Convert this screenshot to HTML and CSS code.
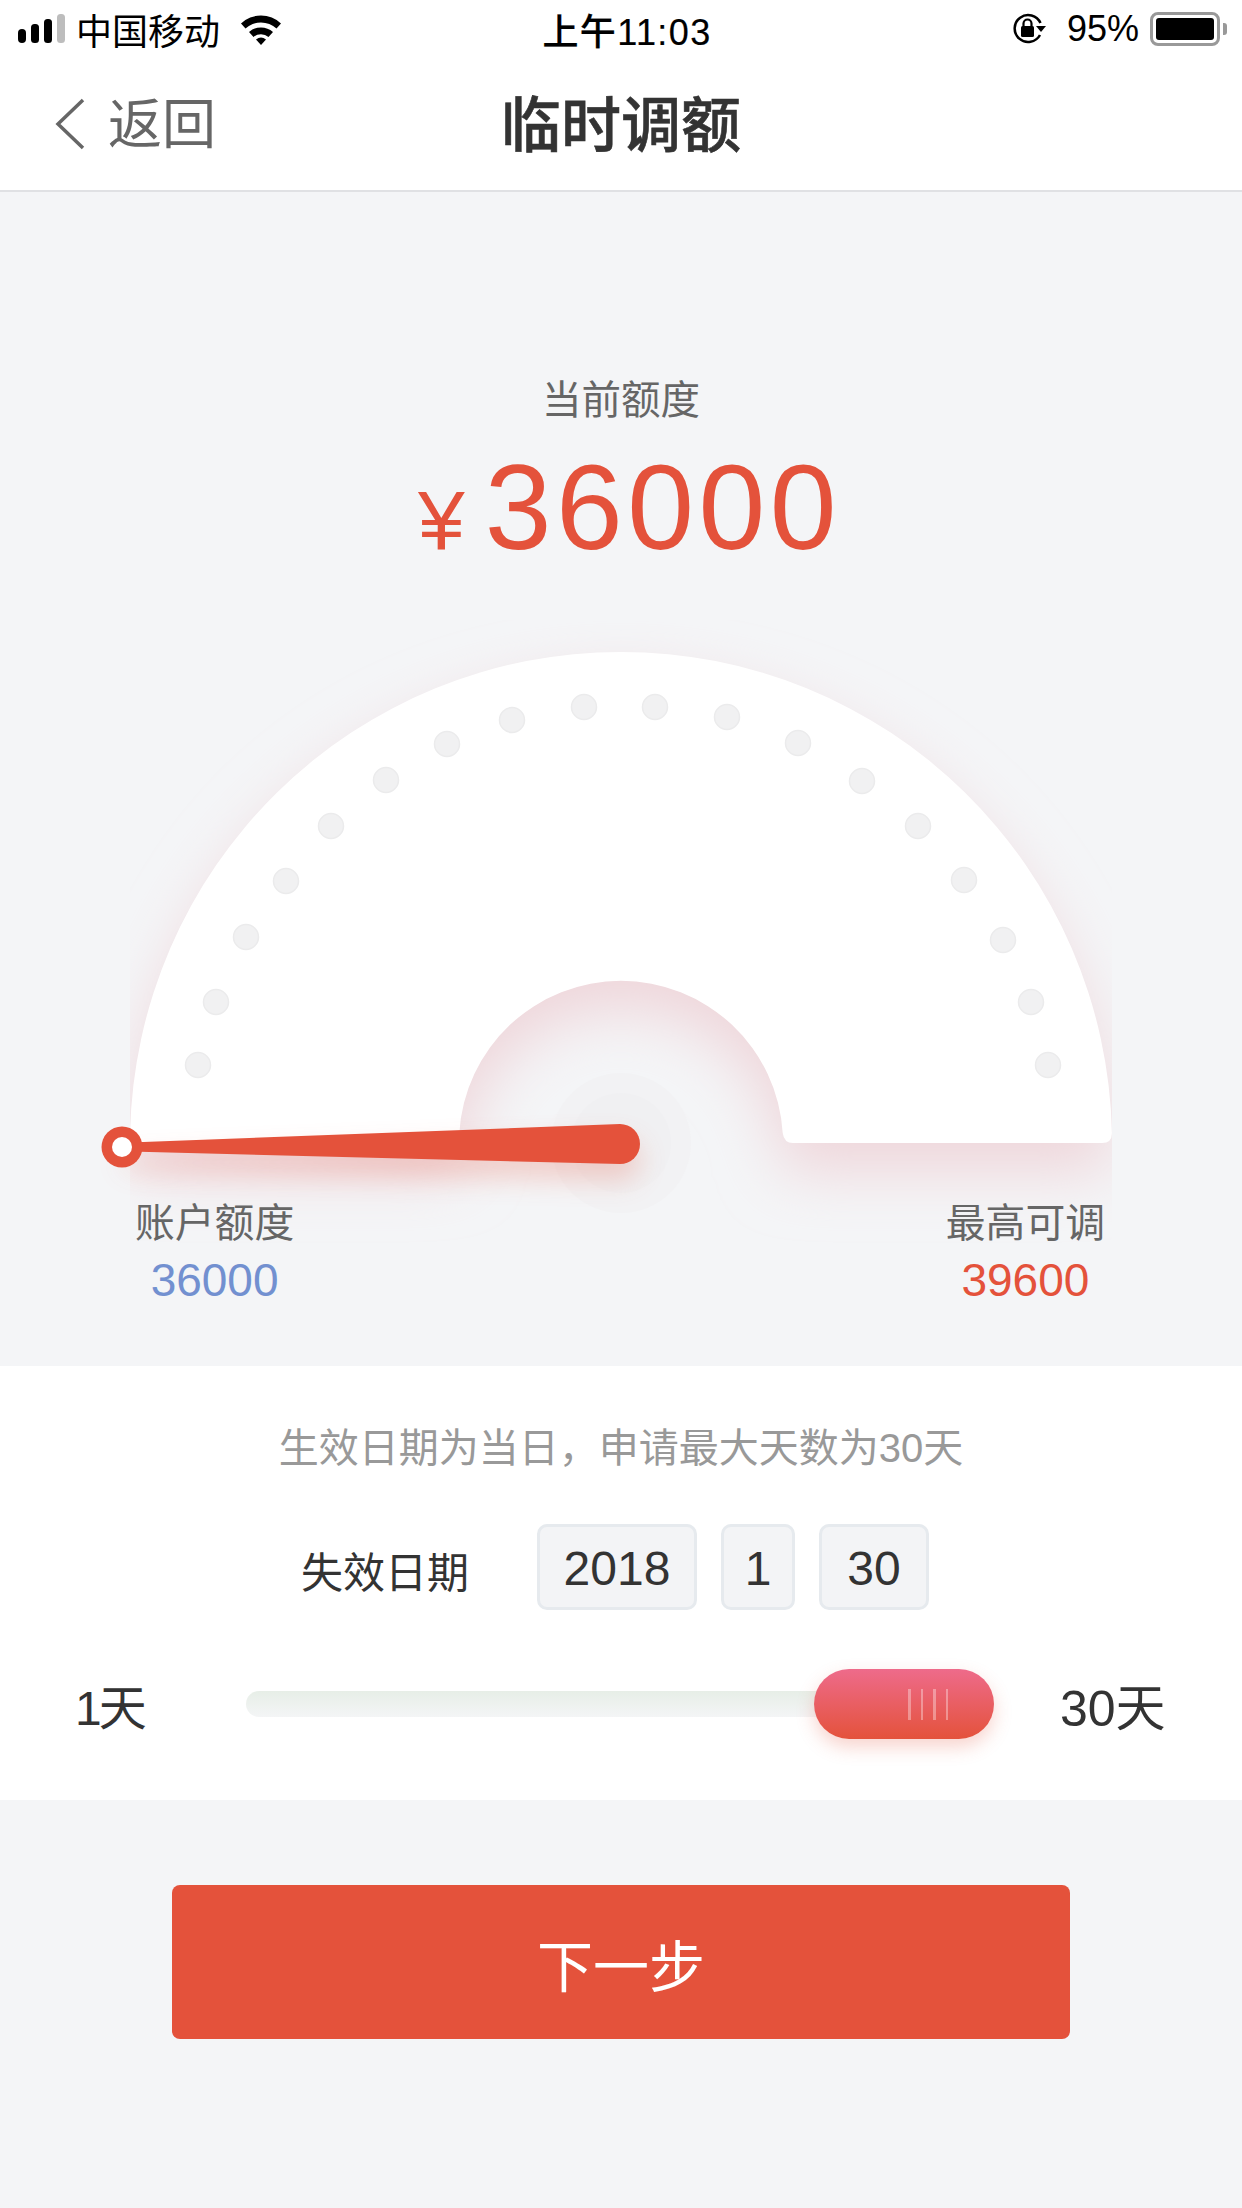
FILE: index.html
```html
<!DOCTYPE html>
<html lang="zh-CN">
<head>
  <meta charset="UTF-8">
  <meta name="viewport" content="width=device-width, initial-scale=1.0">
  <title>临时调额</title>
  <link rel="stylesheet" href="styles.css">
</head>
<body>
  <header class="status-bar">
    <div class="status-left">
      <svg class="signal" width="48" height="30" viewBox="0 0 48 30">
        <rect x="0" y="15" width="8" height="14" rx="4" fill="#000"/>
        <rect x="13" y="10" width="8" height="19" rx="3.5" fill="#000"/>
        <rect x="26" y="5" width="8" height="24" rx="3.5" fill="#000"/>
        <rect x="39" y="0" width="8" height="29" rx="3.5" fill="#bdbdbd"/>
      </svg>
      <span class="carrier">中国移动</span>
      <svg class="wifi" width="44" height="32" viewBox="0 0 44 32">
        <path d="M2 10.5 A29 29 0 0 1 42 10.5 L37.5 15.5 A23 23 0 0 0 6.500 15.5 Z" fill="#000"/>
        <path d="M10 19 A18 18 0 0 1 34 19 L29.500 24 A11.500 11.500 0 0 0 14.500 24 Z" fill="#000"/>
        <path d="M17 26.500 A8 8 0 0 1 27 26.500 L22 32 Z" fill="#000"/>
      </svg>
    </div>
    <div class="status-time">上午11:03</div>
    <div class="status-right">
      <svg class="rotate-lock" width="36" height="32" viewBox="0 0 36 32">
        <path d="M29 22 A13.500 13.500 0 1 1 29.500 10" fill="none" stroke="#000" stroke-width="2.500"/>
        <path d="M25 13 L35 13 L30 19 Z" fill="#000"/>
        <rect x="10" y="13" width="13" height="11" rx="1.500" fill="#000"/>
        <path d="M12.500 13 V10.500 A4 4 0 0 1 20.500 10.500 V13" fill="none" stroke="#000" stroke-width="2.200"/>
      </svg>
      <span class="battery-text">95%</span>
      <div class="battery"><div class="battery-fill"></div></div>
      <div class="battery-nub"></div>
    </div>
  </header>

  <nav class="nav-bar">
    <div class="nav-back">
      <svg width="30" height="52" viewBox="0 0 30 52">
        <path d="M28 2 L3 26 L28 50" fill="none" stroke="#666" stroke-width="3.500"/>
      </svg>
      <span>返回</span>
    </div>
    <h1 class="nav-title">临时调额</h1>
    <div></div>
  </nav>

  <main>
    <section class="quota">
      <p class="quota-label">当前额度</p>
      <p class="quota-amount"><span class="yen">¥</span>36000</p>

      <svg class="gauge" width="1242" height="640" viewBox="0 620 1242 640">
        <defs>
          <clipPath id="gaugeClip"><rect x="130" y="620" width="982" height="640"/></clipPath>
          <filter id="blurWide" x="-20%" y="-20%" width="140%" height="140%"><feGaussianBlur stdDeviation="30"/></filter>
          <filter id="blurNeedle" x="-10%" y="-200%" width="120%" height="500%"><feGaussianBlur stdDeviation="14"/></filter>
        </defs>

        <g clip-path="url(#gaugeClip)">
          <path transform="translate(0 28)" filter="url(#blurWide)" fill="#efd6da" d="M130 1143 A491 491 0 0 1 1112 1143 L783 1143 A162 162 0 0 0 459 1143 Z"/>
        </g>
        <path fill="#fff" d="M130.100 1133 A491 491 0 0 1 1111.900 1133 Q1112 1143 1102 1143 L793 1143 Q784 1143 782.700 1133 A162 162 0 0 0 459.300 1133 Q458 1143 449 1143 L140 1143 Q130 1143 130.100 1133 Z"/>

        <g fill="#f1f1f2" stroke="#ebebec" stroke-width="1.500">
          <circle cx="198" cy="1065" r="12.500"/>
          <circle cx="216" cy="1002" r="12.500"/>
          <circle cx="246" cy="937" r="12.500"/>
          <circle cx="286" cy="881" r="12.500"/>
          <circle cx="331" cy="826" r="12.500"/>
          <circle cx="386" cy="780" r="12.500"/>
          <circle cx="447" cy="744" r="12.500"/>
          <circle cx="512" cy="720" r="12.500"/>
          <circle cx="584" cy="707" r="12.500"/>
          <circle cx="655" cy="707" r="12.500"/>
          <circle cx="727" cy="717" r="12.500"/>
          <circle cx="798" cy="743" r="12.500"/>
          <circle cx="862" cy="781" r="12.500"/>
          <circle cx="918" cy="826" r="12.500"/>
          <circle cx="964" cy="880" r="12.500"/>
          <circle cx="1003" cy="940" r="12.500"/>
          <circle cx="1031" cy="1002" r="12.500"/>
          <circle cx="1048" cy="1065" r="12.500"/>
        </g>

        <circle cx="621" cy="1143" r="70" fill="#f2f2f4"/>
        <circle cx="621" cy="1143" r="50" fill="#f0f0f2"/>

        <path transform="translate(0 16)" filter="url(#blurNeedle)" opacity="0.25" fill="#e4523b" d="M122 1143 L620 1124 A20 20 0 0 1 620 1164 L122 1152 Z"/>
        <path fill="#e4523b" d="M130 1142.500 L620 1124 A20 20 0 0 1 620 1164 L130 1151.500 Z"/>
        <circle cx="122" cy="1147" r="20.500" fill="#e4523b"/>
        <circle cx="122" cy="1147" r="10" fill="#fff"/>
      </svg>

      <div class="limits">
        <div class="limit limit-account">
          <p class="limit-label">账户额度</p>
          <p class="limit-value">36000</p>
        </div>
        <div class="limit limit-max">
          <p class="limit-label">最高可调</p>
          <p class="limit-value">39600</p>
        </div>
      </div>
    </section>

    <section class="expiry">
      <p class="expiry-note">生效日期为当日，申请最大天数为30天</p>
      <div class="expiry-date">
        <span class="expiry-label">失效日期</span>
        <span class="date-box date-year">2018</span>
        <span class="date-box date-month">1</span>
        <span class="date-box date-day">30</span>
      </div>
      <div class="days">
        <span class="days-min">1天</span>
        <div class="track">
          <div class="thumb">
            <i></i><i></i><i></i><i></i>
          </div>
        </div>
        <span class="days-max">30天</span>
      </div>
    </section>

    <div class="actions">
      <button type="button" class="next-btn">下一步</button>
    </div>
  </main>
</body>
</html>
```

FILE: styles.css
```css
* {
  box-sizing: border-box;
}
html, body {
  margin: 0;
  padding: 0;
}
body {
  width: 1242px;
  height: 2208px;
  overflow: hidden;
  background-color: #f4f5f7;
  font-family: "Liberation Sans", "Noto Sans CJK SC", sans-serif;
  color: #333;
}
p, h1 {
  margin: 0;
  font-weight: normal;
}

/* status bar */
.status-bar {
  display: grid;
  grid-template-columns: 1fr auto 1fr;
  align-items: center;
  height: 58px;
  background-color: #fff;
  color: #000;
  font-size: 36px;
}
.status-left {
  display: flex;
  align-items: center;
  padding-left: 18px;
}
.carrier {
  margin-left: 10px;
}
.wifi {
  margin-left: 19px;
}
.status-time {
  padding-left: 12px;
  font-weight: 500;
  letter-spacing: 1.4px;
  -webkit-text-stroke: 0.2px #000;
}
.status-right {
  display: flex;
  align-items: center;
  justify-content: flex-end;
  padding-right: 15px;
}
.battery-text {
  margin-left: 20px;
}
.battery {
  width: 70px;
  height: 34px;
  margin-left: 11px;
  padding: 3px;
  border: 3px solid #999;
  border-radius: 8px;
}
.battery-fill {
  width: 100%;
  height: 100%;
  background-color: #000;
  border-radius: 3px;
}
.battery-nub {
  width: 4px;
  height: 12px;
  margin-left: 3px;
  background-color: #999;
  border-radius: 0 3px 3px 0;
}

/* nav */
.nav-bar {
  display: grid;
  grid-template-columns: 1fr auto 1fr;
  align-items: center;
  height: 134px;
  padding-bottom: 7px;
  background-color: #fff;
  border-bottom: 2px solid #e0e1e4;
}
.nav-back {
  display: flex;
  align-items: center;
  padding-left: 55px;
  font-size: 54px;
  color: #666;
}
.nav-back svg {
  margin-top: 6px;
}
.nav-back span {
  margin-left: 23px;
}
.nav-title {
  font-size: 60px;
  font-weight: 500;
  -webkit-text-stroke: 0.6px #333;
}

/* gauge section */
.quota {
  height: 1174px;
  padding-top: 180px;
  text-align: center;
}
.quota-label {
  font-size: 39.500px;
  line-height: 56px;
  color: #666;
}
.quota-amount {
  height: 140px;
  margin-top: 7px;
  padding-left: 17px;
  font-size: 120px;
  line-height: 144px;
  letter-spacing: 4.5px;
  color: #e4523b;
}
.yen {
  margin-right: 20px;
  font-size: 84px;
  letter-spacing: 0;
}
.gauge {
  display: block;
  margin-top: 45px;
}
.limits {
  position: relative;
  display: flex;
  justify-content: space-between;
  margin-top: -65px;
  padding: 0 137px 0 135px;
}
.limit-label {
  font-size: 39.800px;
  line-height: 56px;
  color: #666;
}
.limit-value {
  margin-top: 4px;
  font-size: 46px;
  line-height: 50px;
}
.limit-account .limit-value {
  color: #7290d0;
}
.limit-max .limit-value {
  color: #e4523b;
}

/* expiry section */
.expiry {
  height: 434px;
  padding-top: 54px;
  background-color: #fff;
}
.expiry-note {
  font-size: 40px;
  line-height: 56px;
  text-align: center;
  color: #999;
}
.expiry-date {
  display: flex;
  align-items: center;
  margin-top: 48px;
  padding-left: 301px;
}
.expiry-label {
  width: 236px;
  padding-top: 4px;
  font-size: 42px;
}
.date-box {
  height: 86px;
  margin-right: 24px;
  font-size: 48px;
  line-height: 84px;
  text-align: center;
  background-color: #f3f4f6;
  border: 3px solid #e6eaee;
  border-radius: 10px;
}
.date-year {
  width: 160px;
}
.date-month {
  width: 74px;
}
.date-day {
  width: 110px;
}
.days {
  display: grid;
  grid-template-columns: 171px 748px 1fr;
  align-items: center;
  margin-top: 58px;
  padding-left: 75px;
  font-size: 48px;
}
.days-min {
  letter-spacing: -3px;
}
.days-max {
  margin-left: 66px;
  font-size: 50px;
}
.track {
  position: relative;
  height: 26px;
  background: linear-gradient(#e7eee7, #f4f5f6);
  border-radius: 13px;
}
.thumb {
  position: absolute;
  right: 0;
  top: -22px;
  display: flex;
  gap: 10px;
  justify-content: flex-end;
  align-items: center;
  width: 180px;
  height: 70px;
  padding-right: 46px;
  background: linear-gradient(#ee6b8b, #e4523b);
  border-radius: 35px;
  box-shadow: 0 8px 18px rgba(228, 82, 59, 0.25);
}
.thumb i {
  display: block;
  width: 2.500px;
  height: 31px;
  background-color: rgba(255, 255, 255, 0.35);
}

/* next */
.actions {
  padding-top: 85px;
  text-align: center;
}
.next-btn {
  width: 898px;
  height: 154px;
  padding: 0;
  font-family: inherit;
  font-size: 56px;
  color: #fff;
  background-color: #e4523b;
  border: none;
  border-radius: 8px;
}
```
